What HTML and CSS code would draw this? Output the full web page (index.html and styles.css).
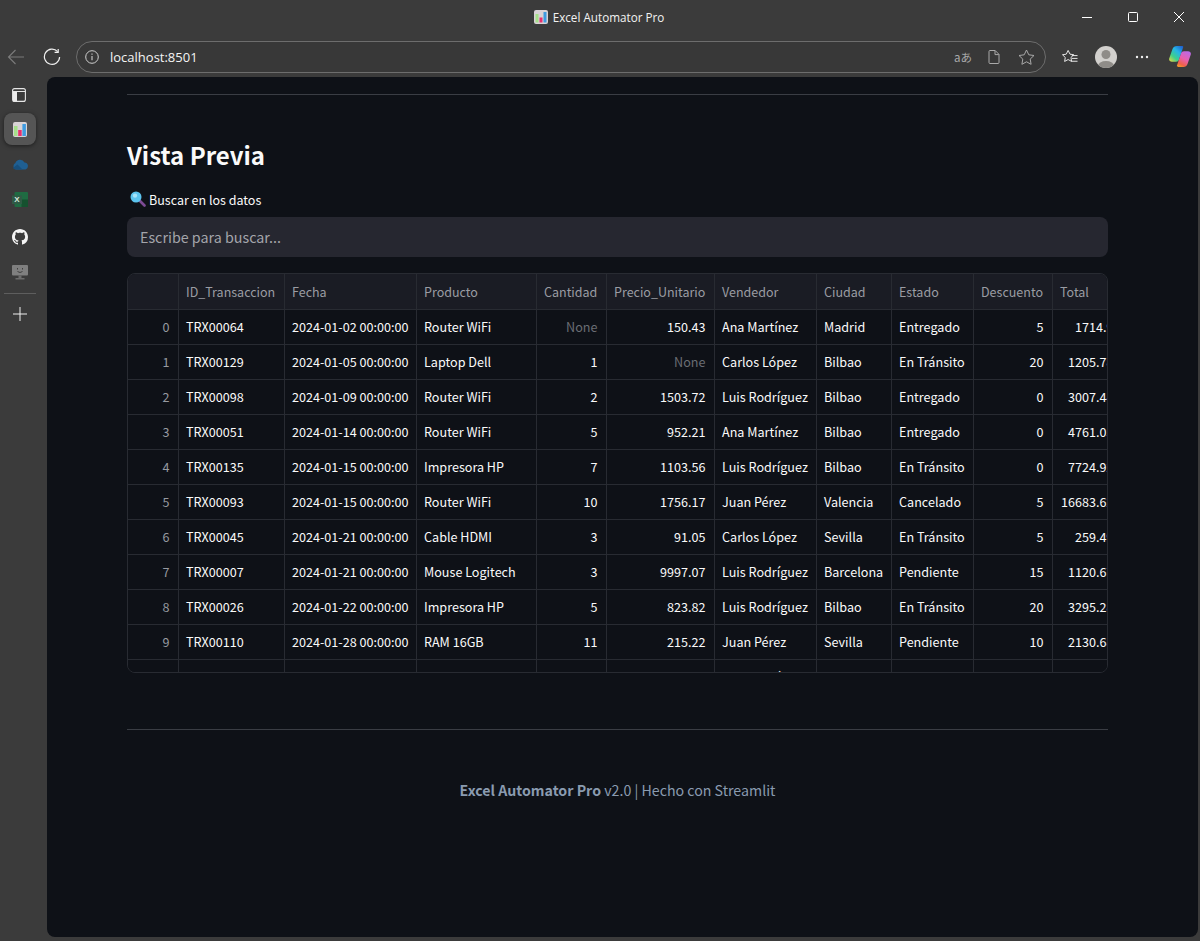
FILE: index.html
```html
<!DOCTYPE html>
<html>
	<head>
		<meta charset="UTF-8">
		<title>Excel Automator Pro</title>
		<link rel="stylesheet" href="styles.css">
	</head>
	<body>
		<!-- barra de titulo -->
		<div class="titlebar">
			<div></div>
			<div class="wintitle">
				<svg width="14" height="14" viewBox="0 0 14 14"><rect width="14" height="14" rx="2" fill="#d9d3d6"/><rect x="1.5" y="4" width="3" height="8.500" fill="#a6e08a"/><rect x="5.500" y="7.500" width="3" height="5" fill="#e8306e"/><rect x="9.500" y="2" width="3" height="10.500" fill="#3f9be0"/></svg>
				<span>Excel Automator Pro</span>
			</div>
			<div class="winbtns">
				<svg width="12" height="12" viewBox="0 0 12 12"><path d="M1 6.500h10" stroke="#fff" fill="none"/></svg>
				<svg width="12" height="12" viewBox="0 0 12 12"><rect x="1.500" y="1.500" width="9" height="9" rx="1" stroke="#fff" fill="none"/></svg>
				<svg width="12" height="12" viewBox="0 0 12 12"><path d="M1 1l10 10M11 1L1 11" stroke="#fff" fill="none"/></svg>
			</div>
		</div>
		<!-- barra de navegacion -->
		<div class="toolbar">
			<svg class="navicon" width="18" height="18" viewBox="0 0 18 18"><path d="M17 9H1.500M8.500 2L1.500 9l7 7" stroke="#7b7b7b" stroke-width="1.100" fill="none"/></svg>
			<svg class="navicon" width="18" height="18" viewBox="0 0 18 18"><path d="M14.600 3.600A7.600 7.600 0 1 0 16.600 9" stroke="#efefef" stroke-width="1.200" fill="none"/><path d="M15.200 1v3.400h-3.600" stroke="#efefef" stroke-width="1.200" fill="none"/></svg>
			<div class="address">
				<svg width="14" height="14" viewBox="0 0 14 14"><circle cx="7" cy="7" r="6.300" stroke="#cfcfcf" fill="none"/><path d="M7 6v4.200M7 3.600v1.200" stroke="#cfcfcf" stroke-width="1.100"/></svg>
				<span class="url">localhost:8501</span>
				<div class="addr-right">
					<span class="aa">aあ</span>
					<svg width="12" height="14" viewBox="0 0 12 14"><path d="M1 1.500a1 1 0 0 1 1-1h5.200L11 4.400v8.100a1 1 0 0 1-1 1H2a1 1 0 0 1-1-1zM7 .8v3.800h3.800" stroke="#a9a9a9" fill="none"/></svg>
					<svg width="17" height="16" viewBox="0 0 17 16"><path d="M8.500 1l2.300 4.800 5.200.7-3.800 3.600.9 5.200-4.600-2.500-4.600 2.500.9-5.200L1 6.500l5.200-.7z" stroke="#a9a9a9" fill="none"/></svg>
				</div>
			</div>
			<div class="tool-right">
				<svg width="16" height="16" viewBox="0 0 17 16"><path d="M6.500 1l2 4 4 .6-3 2.900.7 4.200-3.700-2-3.700 2 .7-4.200-3-2.900 4-.6z" stroke="#f0f0f0" fill="none"/><path d="M10.500 6.500h6M10.500 9.500h6M10 12.500h6.500" stroke="#f0f0f0"/></svg>
				<svg width="22" height="22" viewBox="0 0 22 22"><defs><clipPath id="av"><circle cx="11" cy="11" r="11"/></clipPath></defs><circle cx="11" cy="11" r="11" fill="#d2d0cd"/><g clip-path="url(#av)" fill="#8f8c88"><circle cx="11" cy="8.500" r="4.500"/><ellipse cx="11" cy="20" rx="8" ry="5"/></g></svg>
				<svg class="dots" width="14" height="4" viewBox="0 0 14 4"><circle cx="2" cy="2" r="1.200" fill="#f0f0f0"/><circle cx="7" cy="2" r="1.200" fill="#f0f0f0"/><circle cx="12" cy="2" r="1.200" fill="#f0f0f0"/></svg>
				<svg width="22" height="21" viewBox="0 0 22 21"><defs><linearGradient id="cpa" x1="0.900" y1="0" x2="0.100" y2="1"><stop offset="0" stop-color="#1f5fd0"/><stop offset=".35" stop-color="#25b4e8"/><stop offset=".7" stop-color="#3fd08a"/><stop offset="1" stop-color="#d8d84a"/></linearGradient><linearGradient id="cpb" x1="0.800" y1="0" x2="0.300" y2="1"><stop offset="0" stop-color="#b86ae8"/><stop offset=".5" stop-color="#e860b0"/><stop offset=".85" stop-color="#f0604a"/><stop offset="1" stop-color="#f09030"/></linearGradient></defs><path d="M8 0h5c.8 0 1.300.5 1.200 1.200L10 13.500c-.5 1.500-1.500 2.200-3 2.200H3c-2 0-3.300-1.200-2.800-3.200L3.500 3C4.200 1 5.800 0 8 0z" fill="url(#cpa)"/><path d="M14.500 21H9c-.8 0-1.300-.5-1.100-1.200L12 7.500c.5-1.500 1.500-2.200 3-2.200h4c2 0 3.300 1.200 2.800 3.200L18.500 18c-.7 2-2 3-4 3z" fill="url(#cpb)"/></svg>
			</div>
		</div>
		<div class="main">
			<!-- barra lateral -->
			<div class="sidebar">
				<svg class="panel-icon" width="14" height="14" viewBox="0 0 14 14"><rect x=".6" y=".6" width="12.800" height="12.800" rx="2" stroke="#e6e6e6" stroke-width="1.100" fill="none"/><rect x="1" y="3.500" width="4" height="9.500" fill="#ececec"/><path d="M.6 3.500h12.800" stroke="#e6e6e6"/></svg>
				<div class="side-active">
					<svg width="14" height="15" viewBox="0 0 14 15"><rect width="14" height="15" rx="2" fill="#d9d3d6"/><rect x="1" y="4" width="3.500" height="10" fill="#a6e08a"/><rect x="5.200" y="8" width="3.500" height="6" fill="#e8306e"/><rect x="9.400" y="2" width="3.500" height="12" fill="#3f9be0"/></svg>
				</div>
				<svg class="side-icon" width="16" height="11" viewBox="0 0 16 11"><path d="M4 10.500a3.500 3.500 0 0 1-.6-6.500A5 5 0 0 1 12.500 3.500a3.600 3.600 0 0 1 1 7z" fill="#1f5f92"/><path d="M.8 9l4.700-3.500 5 5H3z" fill="#174f7c"/></svg>
				<svg class="side-icon" width="16" height="15" viewBox="0 0 16 15"><rect x="2.500" y="0" width="13.500" height="15" rx="1" fill="#1f6b42"/><rect x="9.500" y="7.500" width="6.500" height="7.500" fill="#15512f"/><rect x="0" y="3.500" width="10" height="8.500" fill="#2f5a45"/><text x="5" y="10.300" class="xl">X</text></svg>
				<svg class="side-icon" width="16" height="16" viewBox="0 0 16 16"><path fill="#f4f4f4" d="M8 0C3.580 0 0 3.580 0 8c0 3.540 2.290 6.530 5.470 7.590.4.070.55-.17.55-.38 0-.19-.01-.82-.01-1.490-2.010.37-2.530-.49-2.690-.94-.09-.23-.48-.94-.82-1.130-.28-.15-.68-.52-.01-.53.630-.01 1.080.58 1.230.82.720 1.210 1.870.87 2.330.66.070-.52.280-.87.510-1.070-1.780-.2-3.640-.89-3.640-3.950 0-.87.310-1.590.82-2.150-.08-.2-.36-1.020.08-2.120 0 0 .67-.21 2.200.82.640-.18 1.320-.27 2-.27s1.360.09 2 .27c1.530-1.040 2.200-.82 2.200-.82.440 1.100.16 1.920.08 2.120.51.560.82 1.270.82 2.150 0 3.070-1.870 3.750-3.650 3.950.29.250.54.730.54 1.480 0 1.070-.01 1.930-.01 2.200 0 .21.150.46.550.38A8.010 8.010 0 0 0 16 8c0-4.420-3.580-8-8-8z"/></svg>
				<svg class="side-icon side-mon" width="16" height="15" viewBox="0 0 16 15"><rect y="0" width="16" height="10.500" rx="1" fill="#7f7f7f"/><rect x="6.500" y="10.500" width="3" height="2.500" fill="#6c6c6c"/><rect x="3.500" y="13" width="9" height="1.500" fill="#6c6c6c"/><path d="M5.500 3v1.500M10.500 3v1.500M5.500 6.500q2.500 2 5 0" stroke="#3f3f3f" fill="none"/></svg>
				<div class="side-line"></div>
				<svg class="side-plus" width="16" height="16" viewBox="0 0 16 16"><path d="M8 1v14M1 8h14" stroke="#f0f0f0" fill="none"/></svg>
			</div>
			<!-- contenido -->
			<div class="content">
				<hr class="rule">
				<h2 class="heading">Vista Previa</h2>
				<label class="search-label">
					<svg width="16" height="16" viewBox="0 0 16 16"><path d="M9.500 9.500l5 5" stroke="#7d4a94" stroke-width="2.600" stroke-linecap="round"/><circle cx="6" cy="6" r="5.500" fill="#5cc4ee"/><circle cx="5" cy="4.600" r="2.200" fill="#a6e4fa"/></svg>
					<span>Buscar en los datos</span>
				</label>
				<div class="search-box">Escribe para buscar...</div>
				<div class="table-wrap">
					<table>
						<colgroup>
							<col class="c0"><col class="c1"><col class="c2"><col class="c3"><col class="c4"><col class="c5"><col class="c6"><col class="c7"><col class="c8"><col class="c9"><col class="c10">
						</colgroup>
						<thead>
							<tr><th></th><th>ID_Transaccion</th><th>Fecha</th><th>Producto</th><th>Cantidad</th><th>Precio_Unitario</th><th>Vendedor</th><th>Ciudad</th><th>Estado</th><th>Descuento</th><th>Total</th></tr>
						</thead>
						<tbody>
							<tr><td class="idx">0</td><td>TRX00064</td><td>2024-01-02 00:00:00</td><td>Router WiFi</td><td class="num none">None</td><td class="num">150.43</td><td>Ana Martínez</td><td>Madrid</td><td>Entregado</td><td class="num">5</td><td class="num">1714.9</td></tr>
							<tr><td class="idx">1</td><td>TRX00129</td><td>2024-01-05 00:00:00</td><td>Laptop Dell</td><td class="num">1</td><td class="num none">None</td><td>Carlos López</td><td>Bilbao</td><td>En Tránsito</td><td class="num">20</td><td class="num">1205.78</td></tr>
							<tr><td class="idx">2</td><td>TRX00098</td><td>2024-01-09 00:00:00</td><td>Router WiFi</td><td class="num">2</td><td class="num">1503.72</td><td>Luis Rodríguez</td><td>Bilbao</td><td>Entregado</td><td class="num">0</td><td class="num">3007.44</td></tr>
							<tr><td class="idx">3</td><td>TRX00051</td><td>2024-01-14 00:00:00</td><td>Router WiFi</td><td class="num">5</td><td class="num">952.21</td><td>Ana Martínez</td><td>Bilbao</td><td>Entregado</td><td class="num">0</td><td class="num">4761.05</td></tr>
							<tr><td class="idx">4</td><td>TRX00135</td><td>2024-01-15 00:00:00</td><td>Impresora HP</td><td class="num">7</td><td class="num">1103.56</td><td>Luis Rodríguez</td><td>Bilbao</td><td>En Tránsito</td><td class="num">0</td><td class="num">7724.92</td></tr>
							<tr><td class="idx">5</td><td>TRX00093</td><td>2024-01-15 00:00:00</td><td>Router WiFi</td><td class="num">10</td><td class="num">1756.17</td><td>Juan Pérez</td><td>Valencia</td><td>Cancelado</td><td class="num">5</td><td class="num">16683.62</td></tr>
							<tr><td class="idx">6</td><td>TRX00045</td><td>2024-01-21 00:00:00</td><td>Cable HDMI</td><td class="num">3</td><td class="num">91.05</td><td>Carlos López</td><td>Sevilla</td><td>En Tránsito</td><td class="num">5</td><td class="num">259.49</td></tr>
							<tr><td class="idx">7</td><td>TRX00007</td><td>2024-01-21 00:00:00</td><td>Mouse Logitech</td><td class="num">3</td><td class="num">9997.07</td><td>Luis Rodríguez</td><td>Barcelona</td><td>Pendiente</td><td class="num">15</td><td class="num">1120.67</td></tr>
							<tr><td class="idx">8</td><td>TRX00026</td><td>2024-01-22 00:00:00</td><td>Impresora HP</td><td class="num">5</td><td class="num">823.82</td><td>Luis Rodríguez</td><td>Bilbao</td><td>En Tránsito</td><td class="num">20</td><td class="num">3295.28</td></tr>
							<tr><td class="idx">9</td><td>TRX00110</td><td>2024-01-28 00:00:00</td><td>RAM 16GB</td><td class="num">11</td><td class="num">215.22</td><td>Juan Pérez</td><td>Sevilla</td><td>Pendiente</td><td class="num">10</td><td class="num">2130.68</td></tr>
							<tr><td></td><td></td><td></td><td></td><td></td><td></td><td>Luis Rodríguez</td><td></td><td></td><td></td><td></td></tr>
						</tbody>
					</table>
				</div>
				<hr class="rule rule-foot">
				<p class="footer"><b>Excel Automator Pro</b> v2.0 | Hecho con Streamlit</p>
			</div>
		</div>
	</body>
</html>
```

FILE: styles.css
```css
*{
	margin: 0;
	padding: 0;
	box-sizing: border-box;
}
html,body{
	height: 100%;
	overflow: hidden;
}
body{
	background: #3b3b3b;
	font-family: "Noto Sans CJK SC", "Noto Sans", sans-serif;
	color: #fafafa;
	display: flex;
	flex-direction: column;
}
svg{
	display: block;
	flex: none;
}
.titlebar{
	height: 36px;
	padding-bottom: 2px;
	display: grid;
	grid-template-columns: 1fr auto 1fr;
	align-items: center;
}
.wintitle{
	display: flex;
	align-items: center;
	gap: 5px;
	padding-right: 2px;
	font-family: "Open Sans", sans-serif;
	font-size: 11.7px;
	color: #f2f2f2;
}
.winbtns{
	display: flex;
	justify-content: flex-end;
	gap: 34px;
	padding-right: 15px;
}
.toolbar{
	height: 41px;
	display: flex;
	align-items: center;
	padding: 0 7px 0 7px;
}
.navicon{
	margin-right: 18px;
}
.navicon + .navicon{
	margin-right: 15px;
}
.address{
	width: 970px;
	height: 32px;
	border: 1px solid #6d6d6d;
	border-radius: 16px;
	display: flex;
	align-items: center;
	padding: 0 10px 0 8px;
	background: #383838;
}
.url{
	margin-left: 11px;
	font-family: "Open Sans", sans-serif;
	font-size: 13px;
	color: #f4f4f4;
}
.addr-right{
	margin-left: auto;
	display: flex;
	align-items: center;
	gap: 18px;
}
.aa{
	font-size: 11.500px;
	color: #a9a9a9;
	line-height: 16px;
	margin-right: -2px;
}
.tool-right{
	display: flex;
	align-items: center;
	margin-left: 16px;
	gap: 17px;
}
.dots{
	margin: 0 3px 0 1px;
}
.main{
	flex: 1;
	display: flex;
	min-height: 0;
	padding: 0 2px 4px 0;
}
.sidebar{
	width: 47px;
	flex: none;
	display: flex;
	flex-direction: column;
	align-items: flex-start;
	padding: 11px 0 0 4px;
}
.panel-icon{
	margin-left: 8px;
}
.side-active{
	width: 32px;
	height: 32px;
	margin-top: 11px;
	border-radius: 8px;
	background: #555;
	box-shadow: 0 1px 4px rgba(0,0,0,0.5);
	display: flex;
	align-items: center;
	justify-content: center;
}
.side-icon{
	margin: 22px 0 0 8px;
}
.side-active + .side-icon{
	margin-top: 14px;
}
.side-icon.side-mon{
	margin-top: 20px;
}
.xl{
	font-family: "Liberation Sans", sans-serif;
	font-size: 8px;
	font-weight: bold;
	fill: #d8e6dc;
	text-anchor: middle;
}
.side-line{
	width: 32px;
	height: 1px;
	background: #5e5e5e;
	margin-top: 13px;
}
.side-plus{
	margin: 12px 0 0 8px;
}
.content{
	flex: 1;
	background: #0e1117;
	border-radius: 8px;
	padding: 17px 90px 0 80px;
	overflow: hidden;
}
.rule{
	border: 0;
	height: 1px;
	background: #3a3d44;
}
.heading{
	font-size: 24px;
	font-weight: 700;
	line-height: 36px;
	margin-top: 42px;
	color: #fafafa;
}
.search-label{
	display: flex;
	align-items: center;
	gap: 3px;
	height: 20px;
	margin-top: 16px;
	padding-left: 3px;
	font-size: 12.500px;
}
.search-box{
	height: 40px;
	margin-top: 8px;
	background: #262730;
	border-radius: 8px;
	padding: 0 13px;
	font-size: 14.300px;
	line-height: 39px;
	color: #a4a5ab;
}
.table-wrap{
	height: 400px;
	margin-top: 16px;
	border: 1px solid #282b32;
	border-radius: 8px;
	overflow: hidden;
}
table{
	table-layout: fixed;
	width: 994px;
	border-collapse: collapse;
	font-size: 12.600px;
}
.c0{width: 50px;}
.c1{width: 106px;}
.c2{width: 132px;}
.c3{width: 120px;}
.c4{width: 70px;}
.c5{width: 108px;}
.c6{width: 102px;}
.c7{width: 75px;}
.c8{width: 82px;}
.c9{width: 79px;}
.c10{width: 70px;}
th,td{
	height: 35px;
	padding: 0 8px 0 7.500px;
	border-right: 1px solid #282b32;
	border-bottom: 1px solid #282b32;
	white-space: nowrap;
	overflow: hidden;
	font-weight: 400;
	text-align: left;
	line-height: 20px;
}
th{
	padding-top: 2px;
	background: #1a1c24;
	color: #9a9ca3;
	font-size: 12.500px;
}
td{
	background: #0e1117;
}
td.num,td.idx{
	overflow: visible;
}
.num{
	text-align: right;
}
.idx{
	text-align: right;
	color: #969aa0;
}
.none{
	color: #6b6e74;
}
.rule-foot{
	margin-top: 56px;
}
.footer{
	margin-top: 49px;
	font-size: 14.200px;
	line-height: 22px;
	text-align: center;
	color: #8a9bb0;
}
```
